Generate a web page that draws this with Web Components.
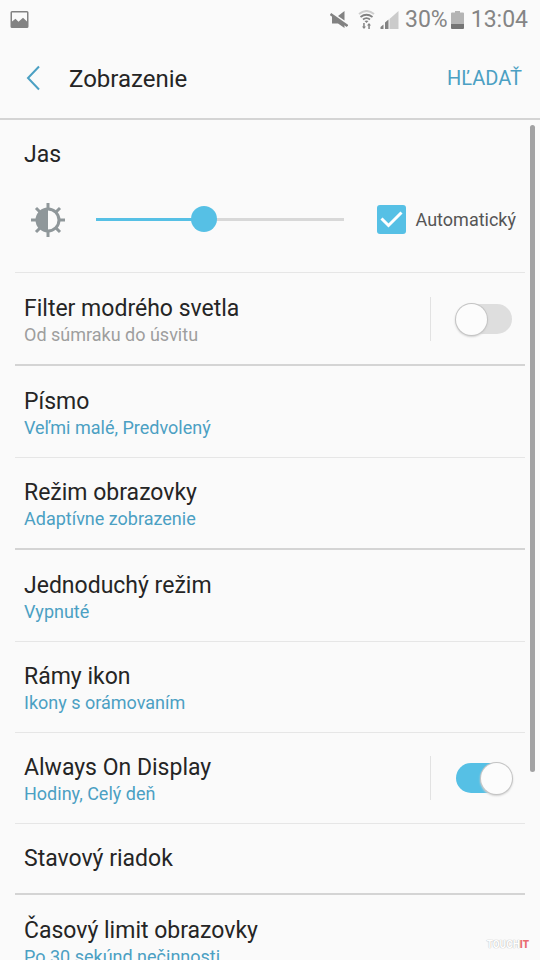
<!DOCTYPE html>
<html lang="sk">
<head>
<meta charset="utf-8">
<meta name="viewport" content="width=device-width, initial-scale=1">
<title>Zobrazenie</title>
<style>
  body { margin: 0; background: #fafafa; font-family: Roboto, "Noto Sans", sans-serif; }
</style>
</head>
<body>
<display-screen></display-screen>

<template id="display-screen">
  <style>
    :host {
      --accent: #56c0e5; --link: #4ba0c3; --text: #252525; --line: #e6e6e6; --strong: #d4d4d4;
      display: flex; flex-direction: column; height: 100vh; overflow: hidden;
      position: relative; color: var(--text);
    }
    main { flex: 1; min-height: 0; overflow: hidden; position: relative; }
    .thumb { position: absolute; top: 5px; right: 5px; width: 5px; height: 77%; border-radius: 3px; background: #a2a2a3; }
    water-mark { position: absolute; right: 11px; bottom: 9px; }
  </style>
  <status-bar></status-bar>
  <app-header><span slot="title">Zobrazenie</span><span slot="action">HĽADAŤ</span></app-header>
  <main>
    <brightness-panel></brightness-panel>
    <setting-group>
      <switch-row>Filter modrého svetla<span slot="summary">Od súmraku do úsvitu</span></switch-row>
    </setting-group>
    <setting-group>
      <setting-row>Písmo<span slot="summary">Veľmi malé, Predvolený</span></setting-row>
      <setting-row>Režim obrazovky<span slot="summary">Adaptívne zobrazenie</span></setting-row>
    </setting-group>
    <setting-group>
      <setting-row>Jednoduchý režim<span slot="summary">Vypnuté</span></setting-row>
      <setting-row>Rámy ikon<span slot="summary">Ikony s orámovaním</span></setting-row>
      <switch-row checked>Always On Display<span slot="summary">Hodiny, Celý deň</span></switch-row>
      <setting-row single>Stavový riadok</setting-row>
    </setting-group>
    <setting-group>
      <setting-row>Časový limit obrazovky<span slot="summary">Po 30 sekúnd nečinnosti</span></setting-row>
    </setting-group>
    <div class="thumb"></div>
  </main>
  <water-mark></water-mark>
</template>

<template id="status-bar">
  <style>
    :host { display: flex; align-items: center; height: 36px; padding: 2px 12px 0 10px; color: #858585; font-size: 23px; line-height: 28px; }
    svg { display: block; flex: none; }
    .right { margin-left: auto; display: flex; align-items: center; }
    .mute { margin-right: 10px; }
    .wifi { margin-right: 5px; }
    .signal { margin-right: 6px; }
    .battery { margin: 0 7px 0 3px; }
  </style>
  <svg width="19" height="19" viewBox="0 0 19 19"><path fill="#828282" fill-rule="evenodd" d="M2 0h15q1.500 0 1.500 1.500v14q0 1.500-1.500 1.500H2q-1.500 0-1.500-1.500v-14Q.5 0 2 0zM2 1.500v9l3.500-2.700 3 3 4.500-4 4 3.700v-9z"/></svg>
  <div class="right">
    <svg class="mute" width="18" height="20" viewBox="0 0 18 20"><path fill="#828282" d="M14.500 1v9.500L8 6zM2 6h2l10.500 7.500V18L8 13.500H2z"/><path stroke="#828282" stroke-width="2.500" d="M.5 4l17 12"/></svg>
    <svg class="wifi" width="17" height="20" viewBox="0 0 17 20" fill="none" stroke="#828282"><path stroke="#cecece" stroke-width="2" d="M1 4q7.500-6 15 0"/><path stroke-width="1.800" d="M2.500 7q6-4.500 12 0M5 9.500q3.500-2.600 7 0"/><path fill="#828282" stroke="none" d="M6.500 11q2-1.200 4 0l-2 2zM5.200 13h1.500v3.500H8l-2 2.500-2-2.500h1.200zM10.300 19v-3.500H9l2-2.500 2 2.500h-1.200V19z"/></svg>
    <svg class="signal" width="19" height="19" viewBox="0 0 19 19"><path fill="#cbcbcb" d="M9.500 8L18.500 0v18h-9z"/><path fill="#828282" d="M.5 18v-2l3-2.500V18zM5 18v-6.500L8.500 8.500V18z"/></svg>
    <span>30%</span>
    <svg class="battery" width="13" height="18" viewBox="0 0 13 18"><path fill="#b4b4b4" d="M1 1.500h3V0h5v1.500h3q1 0 1 1V13H0V2.500q0-1 1-1z"/><path fill="#757575" d="M0 13h13v4q0 1-1 1H1q-1 0-1-1z"/></svg>
    <span>13:04</span>
  </div>
</template>

<template id="app-header">
  <style>
    :host { display: flex; align-items: center; height: 80px; padding: 0 18px 0 16px; border-bottom: 2px solid var(--strong); }
    button { border: 0; background: none; padding: 0; font: inherit; color: var(--link); cursor: pointer; }
    .back { width: 34px; height: 44px; display: grid; place-items: center; }
    svg { display: block; }
    h1 { flex: 1; margin: 0 0 0 19px; padding-top: 2px; font-size: 24px; line-height: 32px; font-weight: 400; }
    .action { font-size: 20px; line-height: 28px; }
  </style>
  <button class="back" aria-label="Späť"><svg width="16" height="26" viewBox="0 0 16 26" fill="none" stroke="currentColor" stroke-width="2"><path d="M14 1.500L3 13l11 11.500"/></svg></button>
  <h1><slot name="title"></slot></h1>
  <button class="action"><slot name="action"></slot></button>
</template>

<template id="brightness-panel">
  <style>
    :host { display: block; margin: 0 15px; padding: 19px 9px 4px; border-bottom: 1px solid var(--line); }
    h2 { margin: 0; font-size: 23px; line-height: 32px; font-weight: 400; }
    .controls { display: flex; align-items: center; height: 97px; padding-left: 6px; }
    svg { display: block; flex: none; }
    .range { flex: 1; min-width: 0; height: 26px; margin: 0 33px 0 30px; appearance: none; background: none; }
    .range::-webkit-slider-runnable-track { height: 3px; background: linear-gradient(to right, var(--accent) 43%, #d8d8d8 43%); }
    .range::-webkit-slider-thumb { appearance: none; width: 26px; height: 26px; margin-top: -12px; border-radius: 50%; background: var(--accent); }
    .auto { position: relative; display: flex; align-items: center; gap: 10px; font-size: 18px; line-height: 24px; color: #555; }
    .tick { display: grid; }
    .tick > * { grid-area: 1 / 1; }
    .tick input { appearance: none; width: 29px; height: 29px; margin: 0; border-radius: 3px; background: #d8d8d8; }
    .tick input:checked { background: var(--accent); }
    .tick svg { pointer-events: none; }
  </style>
  <h2 id="heading">Jas</h2>
  <div class="controls">
    <svg width="36" height="36" viewBox="0 0 36 36"><g stroke="#8f979a" stroke-width="3"><path d="M18 1v7M18 28v7M1 18h7M28 18h7M6 6l5 5M25 25l5 5M6 30l5-5M25 11l5-5"/><circle cx="18" cy="18" r="11" fill="#fafafa"/></g><path fill="#8f979a" d="M18 7a11 11 0 0 0 0 22z"/></svg>
    <input class="range" type="range" min="0" max="100" value="43" aria-labelledby="heading">
    <div class="auto">
      <span class="tick"><input id="auto" type="checkbox" checked><svg width="29" height="29" viewBox="0 0 29 29"><path fill="none" stroke="#fff" stroke-width="3" d="M4.500 13.500l7 7L24.500 7.500"/></svg></span>
      <label for="auto">Automatický</label>
    </div>
  </div>
</template>

<template id="setting-group">
  <style>
    :host { display: block; margin: 0 15px; padding-top: 1px; border-bottom: 2px solid var(--strong); }
    ::slotted(:not(:last-child)) { border-bottom: 1px solid var(--line); }
  </style>
  <slot></slot>
</template>

<template id="setting-row">
  <style>
    :host { display: block; }
    button { display: block; width: 100%; min-height: 90px; padding: 19px 9px; border: 0; background: none; color: inherit; font: inherit; text-align: left; cursor: pointer; }
    :host([single]) button { min-height: 69px; padding: 19px 9px 18px; }
    .title { display: block; font-size: 23px; line-height: 32px; }
    .summary { display: block; font-size: 18px; line-height: 20px; color: var(--link); }
    :host([single]) .summary { display: none; }
  </style>
  <button><span class="title"><slot></slot></span><span class="summary"><slot name="summary"></slot></span></button>
</template>

<template id="switch-row">
  <style>
    :host { display: flex; align-items: center; min-height: 90px; padding: 0 13px 0 9px; }
    label { flex: 1; display: block; padding: 19px 0; }
    .title { display: block; font-size: 23px; line-height: 32px; }
    .summary { display: block; font-size: 18px; line-height: 20px; color: #9e9e9e; }
    :host([checked]) .summary { color: var(--link); }
    .control { display: flex; align-items: center; height: 44px; padding-left: 25px; border-left: 1px solid #e2e2e2; }
    input { appearance: none; display: flex; align-items: center; width: 56px; height: 30px; margin: 0; border-radius: 15px; background: #dedede; }
    input::before { content: ""; width: 31px; height: 31px; flex: none; border-radius: 50%; background: #fcfcfc; box-shadow: 0 0 0 1px #c4c4c4, 0 1px 2px 1px #d0d0d0; }
    input:checked { background: var(--accent); justify-content: flex-end; }
  </style>
  <label for="toggle"><span class="title"><slot></slot></span><span class="summary"><slot name="summary"></slot></span></label>
  <div class="control"><input id="toggle" type="checkbox" role="switch"></div>
</template>

<template id="water-mark">
  <style>
    :host { display: block; font-size: 10px; line-height: 12px; font-weight: 700; color: #fff; text-shadow: 0 0 1px #bbb, 0 0 1px #bbb; }
    b { color: #e96b70; text-shadow: none; }
  </style>
  <span>TOUCH<b>IT</b></span>
</template>

<script>
  class TemplateElement extends HTMLElement {
    constructor() {
      super();
      this.attachShadow({ mode: "open" }).append(document.getElementById(this.localName).content.cloneNode(true));
    }
  }
  class StatusBar extends TemplateElement {}
  class AppHeader extends TemplateElement {}
  class SettingGroup extends TemplateElement {}
  class SettingRow extends TemplateElement {}
  class WaterMark extends TemplateElement {}
  class DisplayScreen extends TemplateElement {}

  class BrightnessPanel extends TemplateElement {
    connectedCallback() {
      const range = this.shadowRoot.querySelector(".range");
      range.addEventListener("input", () => range.setAttribute("aria-valuetext", range.value + " %"));
    }
  }

  class SwitchRow extends TemplateElement {
    connectedCallback() {
      const input = this.shadowRoot.querySelector("input");
      input.checked = this.hasAttribute("checked");
      input.addEventListener("change", () => this.toggleAttribute("checked", input.checked));
    }
  }

  customElements.define("status-bar", StatusBar);
  customElements.define("app-header", AppHeader);
  customElements.define("brightness-panel", BrightnessPanel);
  customElements.define("setting-group", SettingGroup);
  customElements.define("setting-row", SettingRow);
  customElements.define("switch-row", SwitchRow);
  customElements.define("water-mark", WaterMark);
  customElements.define("display-screen", DisplayScreen);
</script>
</body>
</html>
